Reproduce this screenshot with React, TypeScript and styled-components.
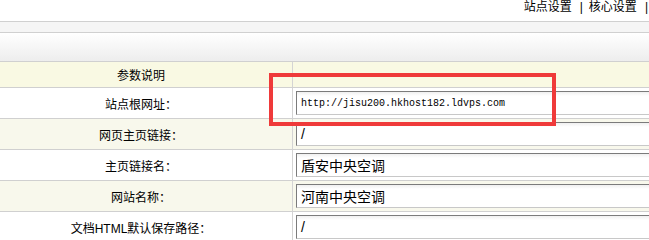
import React from "react";
import styled, { createGlobalStyle } from "styled-components";

const rows = [
  { label: "站点根网址：", value: "http://jisu200.hkhost182.ldvps.com", mono: true, alt: false },
  { label: "网页主页链接：", value: "/", mono: false, alt: true },
  { label: "主页链接名：", value: "盾安中央空调", mono: false, alt: false },
  { label: "网站名称：", value: "河南中央空调", mono: false, alt: true },
  { label: "文档HTML默认保存路径：", value: "/", mono: false, alt: false },
];

const App = () => {
  return (
    <Page>
      <GlobalStyle />
      <TopBar>
        <TopLink>站点设置</TopLink>
        <Sep>|</Sep>
        <TopLink>核心设置</TopLink>
        <Sep>|</Sep>
      </TopBar>
      <SubBar />
      <TitleBar />
      <Table>
        <HeaderRow>
          <LabelCell>参数说明</LabelCell>
          <ValueCell />
        </HeaderRow>
        {rows.map((r) => (
          <Row key={r.label} $alt={r.alt}>
            <LabelCell>{r.label}</LabelCell>
            <ValueCell>
              <Field $mono={r.mono}>{r.value}</Field>
            </ValueCell>
          </Row>
        ))}
      </Table>
      <Highlight />
    </Page>
  );
};

const GlobalStyle = createGlobalStyle`
  body {
    margin: 0;
    background: #fff;
    font-family: "Liberation Sans", "Noto Sans CJK SC", sans-serif;
    font-size: 12px;
    color: #000;
    overflow: hidden;
  }
`;

const Page = styled.div`
  position: relative;
  width: 649px;
  height: 240px;
  overflow: hidden;
`;

const TopBar = styled.div`
  height: 21px;
  border-bottom: 1px solid #d0d0d0;
  display: flex;
  justify-content: flex-end;
  align-items: flex-start;
  line-height: 15px;
`;

const TopLink = styled.span`
  font-size: 12px;
  color: #000;
`;

const Sep = styled.span`
  margin: 0 6px 0 8px;
  font-size: 12px;
  &:last-child {
    margin-right: 1px;
  }
`;

const SubBar = styled.div`
  height: 10px;
  background: #f5f5f5;
  border-bottom: 1px solid #d0d0d0;
`;

const TitleBar = styled.div`
  height: 28px;
  background: linear-gradient(to bottom, #ffffff, #ededed);
  border-bottom: 1px solid #d0d0d0;
`;

const Table = styled.div`
  display: flex;
  flex-direction: column;
`;

const Row = styled.div<{ $alt: boolean }>`
  display: flex;
  height: 30px;
  border-bottom: 1px solid #d0d0d0;
  background: ${({ $alt }) => ($alt ? "#f8f8ec" : "#ffffff")};
`;

const HeaderRow = styled.div`
  display: flex;
  height: 25px;
  border-bottom: 1px solid #d0d0d0;
  background: #f9f9e3;
`;

const LabelCell = styled.div`
  flex: 0 0 auto;
  width: 282px;
  padding-right: 10px;
  border-right: 1px solid #d4d4d4;
  display: flex;
  align-items: center;
  justify-content: center;
  font-size: 12px;
  white-space: nowrap;
`;

const ValueCell = styled.div`
  flex: 1;
  min-width: 0;
  overflow: hidden;
  padding: 3px 0 0 3px;
`;

const Field = styled.div<{ $mono: boolean }>`
  box-sizing: border-box;
  width: 440px;
  height: 24px;
  background: linear-gradient(to bottom, #f0f0f0 0px, #ffffff 4px);
  border: 1px solid #c8c8c8;
  border-top-color: #7b7b7b;
  border-left-color: #7b7b7b;
  padding-left: 4px;
  display: flex;
  align-items: center;
  white-space: nowrap;
  font-family: ${({ $mono }) =>
    $mono
      ? `"Liberation Mono", "Noto Sans CJK SC", monospace`
      : `"Liberation Sans", "Noto Sans CJK SC", sans-serif`};
  font-size: ${({ $mono }) => ($mono ? "10px" : "14px")};
`;

const Highlight = styled.div`
  position: absolute;
  left: 269px;
  top: 73px;
  width: 287px;
  height: 53px;
  box-sizing: border-box;
  border: 4px solid #ef3a3a;
  pointer-events: none;
`;

export default App;
